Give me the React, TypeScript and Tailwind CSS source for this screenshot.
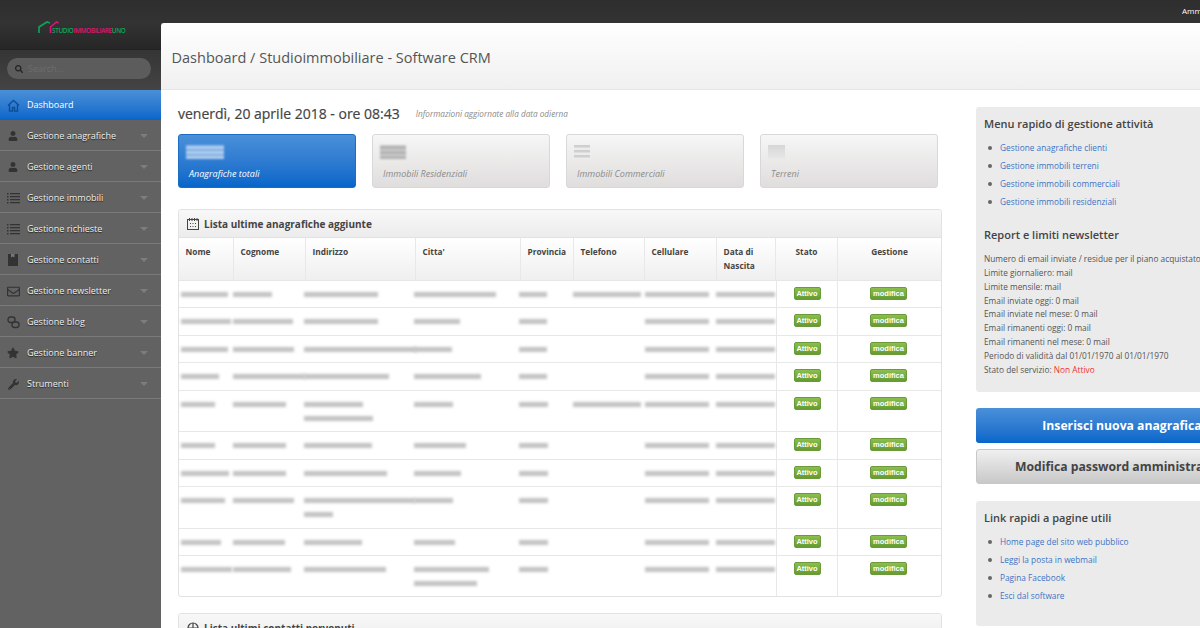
import { FaSearch, FaStar, FaUser, FaWrench } from "react-icons/fa";
import { FaRegEnvelope } from "react-icons/fa";
import type { ReactNode } from "react";

function ListIcon() {
  return (
    <svg width="13" height="11" viewBox="0 0 13 11" fill="#333">
      <path d="M0 0h1.5v1.5H0zM0 3h1.5v1.5H0zM0 6h1.5v1.5H0zM0 9h1.5v1.5H0z" />
      <path d="M3 0h10v1.3H3zM3 3h10v1.3H3zM3 6h10v1.3H3zM3 9h10v1.3H3z" />
    </svg>
  );
}

function BookIcon() {
  return (
    <svg width="10" height="12" viewBox="0 0 10 12">
      <path d="M0 0h10v12H0z" fill="#333" />
      <path d="M3 0h3.5v3.5L4.75 2.5 3 3.5z" fill="#777" />
    </svg>
  );
}

const menu: { label: string; icon: ReactNode }[] = [
  { label: "Gestione anagrafiche", icon: <FaUser size={10} /> },
  { label: "Gestione agenti", icon: <FaUser size={10} /> },
  { label: "Gestione immobili", icon: <ListIcon /> },
  { label: "Gestione richieste", icon: <ListIcon /> },
  { label: "Gestione contatti", icon: <BookIcon /> },
  { label: "Gestione newsletter", icon: <FaRegEnvelope size={13} /> },
  {
    label: "Gestione blog",
    icon: (
      <svg width="13" height="13" viewBox="0 0 13 13" fill="none" stroke="currentColor" strokeWidth="1.4">
        <rect x="1" y="1" width="7" height="5.5" rx="2.4" />
        <rect x="5" y="6" width="7" height="5.5" rx="2.4" />
      </svg>
    ),
  },
  { label: "Gestione banner", icon: <FaStar size={12} /> },
  { label: "Strumenti", icon: <FaWrench size={11} /> },
];

// larghezze delle barre sfocate per colonna, una lista per riga di testo
type Cell = number[];
const rows: { h: string; cells: Cell[] }[] = [
  { h: "h-[27px]", cells: [[47], [39], [74], [82], [28], [68], [64], [59]] },
  { h: "h-[28px]", cells: [[50], [60], [74], [46], [28], [0], [64], [59]] },
  { h: "h-[27px]", cells: [[47], [61], [112], [38], [28], [0], [64], [59]] },
  { h: "h-[28px]", cells: [[38], [72], [85], [67], [28], [0], [64], [59]] },
  { h: "h-[41px]", cells: [[34], [53], [59, 69], [39], [29], [68], [64], [59]] },
  { h: "h-[28px]", cells: [[34], [53], [68], [52], [29], [0], [64], [59]] },
  { h: "h-[27px]", cells: [[48], [53], [83], [47], [29], [0], [64], [59]] },
  { h: "h-[42px]", cells: [[44], [61], [111, 29], [39], [29], [0], [64], [59]] },
  { h: "h-[27px]", cells: [[40], [52], [58], [41], [29], [0], [64], [59]] },
  { h: "h-[40px]", cells: [[51], [58], [82], [75, 63], [29], [0], [64], [59]] },
];

const columns = [
  { label: "Nome", w: "w-[55px]", bar: "ml-[2px]" },
  { label: "Cognome", w: "w-[72px]", bar: "-ml-[1px]" },
  { label: "Indirizzo", w: "w-[110px]", bar: "-ml-[2px]" },
  { label: "Citta'", w: "w-[105px]", bar: "-ml-[2px]" },
  { label: "Provincia", w: "w-[53px]", bar: "-ml-[2px]" },
  { label: "Telefono", w: "w-[71px]", bar: "-ml-[1px]" },
  { label: "Cellulare", w: "w-[72px]", bar: "ml-0" },
  { label: "Data di Nascita", w: "w-[59px]", bar: "-ml-[1px]" },
];

const quick = [
  "Gestione anagrafiche clienti",
  "Gestione immobili terreni",
  "Gestione immobili commerciali",
  "Gestione immobili residenziali",
];
const report = [
  "Numero di email inviate / residue per il piano acquistato",
  "Limite giornaliero: mail",
  "Limite mensile: mail",
  "Email inviate oggi: 0 mail",
  "Email inviate nel mese: 0 mail",
  "Email rimanenti oggi: 0 mail",
  "Email rimanenti nel mese: 0 mail",
  "Periodo di validità dal 01/01/1970 al 01/01/1970",
];
const links = [
  "Home page del sito web pubblico",
  "Leggi la posta in webmail",
  "Pagina Facebook",
  "Esci dal software",
];

function Blur({ width, className }: { width: number; className: string }) {
  if (!width) return null;
  return (
    <div
      className={"h-[5px] bg-[#c2c2c2] blur-[1.5px] " + className}
      style={{ width }}
    />
  );
}

function CalendarIcon() {
  return (
    <svg width="12" height="12" viewBox="0 0 12 12" className="text-[#444]">
      <rect x="0.5" y="1.5" width="11" height="10" fill="none" stroke="currentColor" />
      <path d="M2.5 0v3M5 0v3M7.5 0v3M10 0v3" stroke="currentColor" />
      <path d="M3 5h1v1H3zM5.5 5h1v1h-1zM8 5h1v1H8zM3 8h1v1H3zM5.5 8h1v1h-1zM8 8h1v1H8z" fill="currentColor" />
    </svg>
  );
}

function StatCard({ label, bars, active }: { label: string; bars: ReactNode; active?: boolean }) {
  return (
    <div
      className={
        "h-[54px] w-[178px] rounded-[3px] border px-[7px] pt-[10px] " +
        (active
          ? "border-[#1a6fc4] bg-gradient-to-b from-[#4a90d9] to-[#0566c9]"
          : "border-[#d8d8d8] bg-gradient-to-b from-[#f6f6f6] to-[#e0dedd]")
      }
    >
      <div className="h-[16px]">{bars}</div>
      <div
        className={
          "mt-[6px] pl-[3px] text-[9px] italic leading-[14px] " +
          (active ? "text-white" : "text-[#8a8a8a]")
        }
      >
        {label}
      </div>
    </div>
  );
}

function PanelHeading({ children, icon }: { children: ReactNode; icon: ReactNode }) {
  return (
    <div className="flex h-[28px] items-center gap-[5px] rounded-t-[3px] border-b border-[#e2e2e2] bg-gradient-to-b from-[#f8f8f8] to-[#ececec] pl-[8px] pt-[1px] text-[10px] font-bold text-[#444]">
      {icon}
      {children}
    </div>
  );
}

function GreenButton({ children, w }: { children: ReactNode; w: string }) {
  return (
    <span
      className={
        "inline-flex h-[13px] items-center justify-center rounded-[2px] border border-[#6c9a3a] bg-gradient-to-b from-[#8bbf4e] to-[#659c30] font-['Liberation_Sans',sans-serif] text-[7.5px] font-bold text-white " +
        w
      }
    >
      {children}
    </span>
  );
}

function LinkList({ items }: { items: string[] }) {
  return (
    <ul className="flex flex-col">
      {items.map((t) => (
        <li key={t} className="flex h-[18px] items-center text-[8.3px] text-[#3b73c4]">
          <span className="ml-[4px] mr-[8px] h-[4px] w-[4px] rounded-full bg-[#666]" />
          {t}
        </li>
      ))}
    </ul>
  );
}

export default function App() {
  return (
    <div className="relative h-[628px] w-[1200px] overflow-hidden bg-[#5f5f5f] font-['Open_Sans',sans-serif]">
      <div className="flex h-[23px] items-start justify-end bg-gradient-to-b from-[#2e2e2e] to-[#333] pl-[161px]">
        <span className="mt-[6px] w-[18px] overflow-hidden whitespace-nowrap text-[8px] leading-[10px] text-white">
          Amministratore
        </span>
      </div>
      <div className="flex h-[605px]">
        <aside className="flex w-[161px] shrink-0 flex-col bg-[#626262] bg-[radial-gradient(#585858_0.5px,transparent_0.6px)] bg-[length:2px_2px]">
          <div className="flex h-[26px] items-start bg-gradient-to-b from-[#333] to-[#262626] pl-[38px]">
            <svg width="21" height="13" viewBox="0 0 21 13" fill="none" className="-mt-[2px] shrink-0" strokeWidth="1.6">
              <path d="M1 12V6l8-5 3 1" stroke="#0ea55a" />
              <path d="M12.5 12V6l6-5 2 1" stroke="#e3107d" />
            </svg>
            <div className="-ml-[7px] mt-[3px] whitespace-nowrap text-[6.4px] font-semibold leading-[9px] tracking-[-0.35px] text-[#0ea55a]">
              STUDIO<span className="text-[#e3107d]">IMMOBILIARE</span>UNO
            </div>
          </div>
          <div className="flex h-[41px] items-center border-t border-[#222] bg-gradient-to-b from-[#353535] to-[#444] px-[7px] pb-[3px]">
            <div className="flex h-[21px] w-[144px] items-center gap-[5px] rounded-full bg-[#5c5c5c] pl-[8px] text-[9px] text-[#6c6c6c]">
              <FaSearch size={8} className="text-[#222]" />
              Search...
            </div>
          </div>
          <div className="flex h-[30px] items-center bg-gradient-to-b from-[#4a90d9] to-[#0566c9] pl-[7px] text-[9px] text-white">
            <svg width="13" height="13" viewBox="0 0 13 13" fill="none" stroke="#0d4f94" strokeWidth="1.4" className="mr-[7px]">
              <path d="M1 6.5 6.5 1.5 12 6.5M2.5 5.5V12h3V8.5h2V12h3V5.5" />
            </svg>
            Dashboard
          </div>
          {menu.map((m) => (
            <div
              key={m.label}
              className="flex h-[31px] items-center border-b border-[#7a7a7a] pl-[6px] pr-[13px] pt-[2px] text-[9px] text-[#f0f0f0] [text-shadow:0_1px_1px_#222]"
            >
              <span className="mr-[7px] flex w-[14px] justify-center text-[#333]">{m.icon}</span>
              <span className="flex-1">{m.label}</span>
              <span className="h-0 w-0 border-x-[4px] border-t-[4px] border-x-transparent border-t-[#7d7d7d]" />
            </div>
          ))}
        </aside>
        <main className="w-[1039px] shrink-0 overflow-hidden rounded-tl-[4px] bg-white">
          <div className="flex h-[67px] items-center border-b border-[#e6e6e6] bg-gradient-to-b from-white to-[#f0f0f0] pl-[10.5px] pt-[3px] text-[14.5px] text-[#555]">
            Dashboard / Studioimmobiliare - Software CRM
          </div>
          <div className="flex">
            <div className="ml-[17px] w-[764px] shrink-0">
              <div className="flex h-[44px] items-center pt-[2px]">
                <span className="text-[14px] font-normal text-[#444] [-webkit-text-stroke:0.2px_#444]">venerdì, 20 aprile 2018 - ore 08:43</span>
                <span className="ml-[16px] mt-[3px] text-[8.2px] italic text-[#8a8a8a]">Informazioni aggiornate alla data odierna</span>
              </div>
              <div className="flex gap-[16px]">
                <StatCard
                  active
                  label="Anagrafiche totali"
                  bars={<div className="h-[14px] w-[38px] bg-[repeating-linear-gradient(#7fb0e4_0,#c6dcf3_3px,#5e9bdc_5px)] blur-[0.8px]" />}
                />
                <StatCard
                  label="Immobili Residenziali"
                  bars={<div className="h-[14px] w-[26px] bg-[repeating-linear-gradient(#cfcfcf_0,#a8a8a8_3px,#d8d8d8_5px)] blur-[0.8px]" />}
                />
                <StatCard
                  label="Immobili Commerciali"
                  bars={<div className="h-[14px] w-[16px] bg-[repeating-linear-gradient(#cfcfcf_0,#cfcfcf_2px,#ececec_3px,#ececec_5px)]" />}
                />
                <StatCard
                  label="Terreni"
                  bars={<div className="h-[14px] w-[17px] bg-gradient-to-b from-[#d6d6d6] to-[#e8e8e8]" />}
                />
              </div>
              <section className="mt-[21px] w-[764px] rounded-[3px] border border-[#e2e2e2]">
                <PanelHeading icon={<CalendarIcon />}>Lista ultime anagrafiche aggiunte</PanelHeading>
                <div className="flex h-[43px] border-b border-[#e6e6e6] bg-gradient-to-b from-white to-[#efefef] text-[8.3px] font-bold leading-[14px] text-[#444]">
                  {columns.map((c) => (
                    <div key={c.label} className={"h-full border-r border-[#e8e8e8] pl-[6.5px] pt-[7px] " + c.w}>
                      {c.label}
                    </div>
                  ))}
                  <div className="w-[62px] border-r border-[#e8e8e8] pt-[7px] text-center">Stato</div>
                  <div className="flex-1 pt-[7px] text-center">Gestione</div>
                </div>
                {rows.map((r, i) => (
                  <div key={i} className={"flex border-b border-[#e8e8e8] last:border-b-0 " + r.h}>
                    {r.cells.map((lines, j) => (
                      <div key={j} className={"flex flex-col gap-[9px] pt-[11px] " + columns[j].w}>
                        {lines.map((w, k) => (
                          <Blur key={k} width={w} className={columns[j].bar} />
                        ))}
                      </div>
                    ))}
                    <div className="flex w-[62px] justify-center border-x border-[#e8e8e8] pt-[6px]">
                      <GreenButton w="w-[27px]">Attivo</GreenButton>
                    </div>
                    <div className="flex flex-1 justify-center pr-[2px] pt-[6px]">
                      <GreenButton w="w-[37px]">modifica</GreenButton>
                    </div>
                  </div>
                ))}
              </section>
              <section className="mt-[16px] w-[764px] rounded-[3px] border border-[#e2e2e2]">
                <PanelHeading
                  icon={
                    <svg width="12" height="12" viewBox="0 0 12 12" fill="none" stroke="#444" strokeWidth="1.2">
                      <circle cx="6" cy="6" r="5" />
                      <path d="M6 1v10M1 6h10" />
                    </svg>
                  }
                >
                  Lista ultimi contatti pervenuti
                </PanelHeading>
              </section>
            </div>
            <div className="ml-[34px] w-[298px] shrink-0 pt-[17px]">
              <div className="h-[285px] rounded-[3px] bg-[#ebebeb] pl-[8px] pt-[8px]">
                <h3 className="mb-[6px] text-[11px] font-semibold leading-[18px] text-[#444]">Menu rapido di gestione attività</h3>
                <LinkList items={quick} />
                <h3 className="mb-[7px] mt-[15px] text-[11px] font-semibold leading-[18px] text-[#444]">Report e limiti newsletter</h3>
                <div className="whitespace-nowrap pt-[1px] text-[8.3px] leading-[13.85px] text-[#555]">
                  {report.map((t) => (
                    <div key={t}>{t}</div>
                  ))}
                  <div>
                    Stato del servizio: <span className="text-[#f03030]">Non Attivo</span>
                  </div>
                </div>
              </div>
              <button className="mt-[16px] block h-[35px] w-[292px] rounded-[3px] bg-gradient-to-b from-[#4a90d9] to-[#0566c9] pt-[1px] text-center text-[12.2px] font-bold text-white">
                Inserisci nuova anagrafica
              </button>
              <button className="mt-[6px] block h-[35px] w-[292px] whitespace-nowrap rounded-[3px] border border-[#c8c8c8] bg-gradient-to-b from-[#f0f0f0] to-[#c8c8c8] pt-[2px] text-center text-[12.2px] font-bold text-[#444]">
                Modifica password amministratore
              </button>
              <div className="mt-[17px] h-[125px] rounded-[3px] bg-[#ebebeb] pl-[8px] pt-[8px]">
                <h3 className="mb-[6px] text-[11px] font-semibold leading-[18px] text-[#444]">Link rapidi a pagine utili</h3>
                <LinkList items={links} />
              </div>
            </div>
          </div>
        </main>
      </div>
    </div>
  );
}
